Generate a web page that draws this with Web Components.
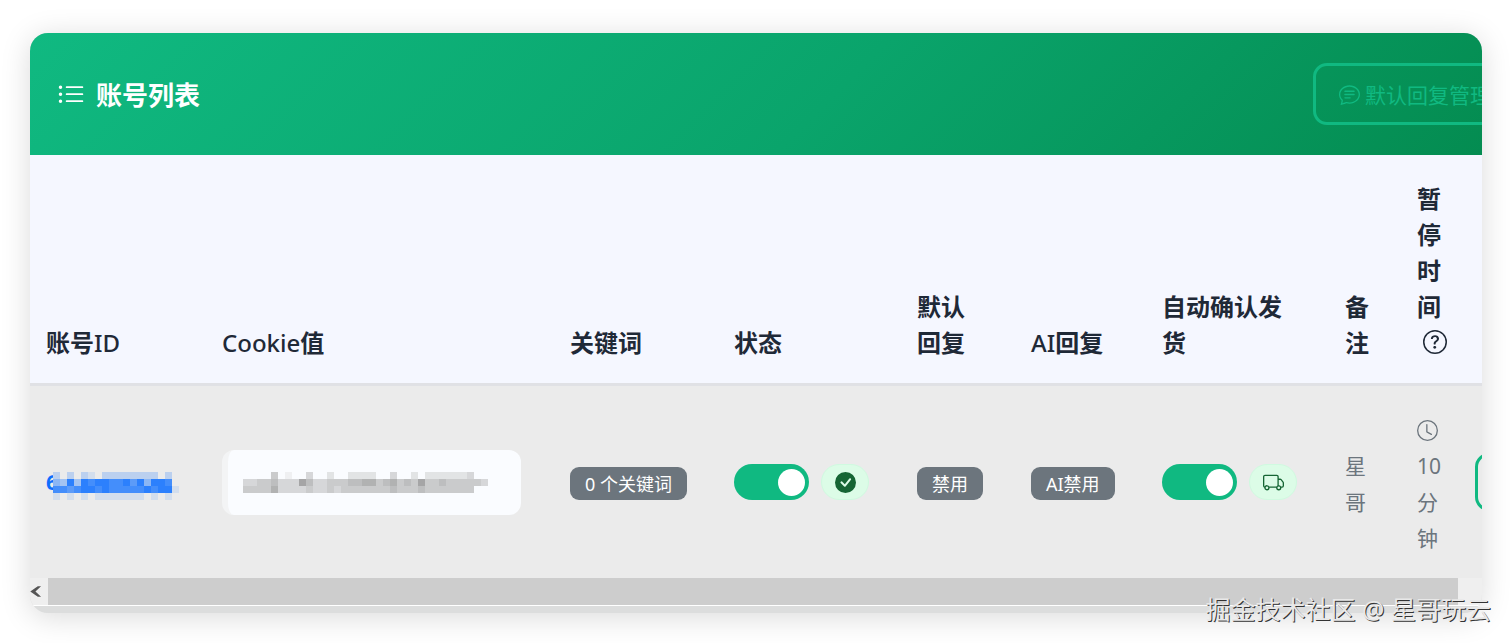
<!DOCTYPE html>
<html lang="zh-CN">
<head>
<meta charset="utf-8">
<title>账号列表</title>
<style>
  html { background: #fff; }
  body { margin: 0; font-family: "Noto Sans", "Noto Sans CJK SC", sans-serif; color: #1f2937; }
</style>
</head>
<body>
<account-page></account-page>
<script>
const ICONS = {
  list: '<path fill-rule="evenodd" d="M5 11.5a.5.5 0 0 1 .5-.5h9a.5.5 0 0 1 0 1h-9a.5.5 0 0 1-.5-.5m0-4a.5.5 0 0 1 .5-.5h9a.5.5 0 0 1 0 1h-9a.5.5 0 0 1-.5-.5m0-4a.5.5 0 0 1 .5-.5h9a.5.5 0 0 1 0 1h-9a.5.5 0 0 1-.5-.5m-3 1a1 1 0 1 0 0-2 1 1 0 0 0 0 2m0 4a1 1 0 1 0 0-2 1 1 0 0 0 0 2m0 4a1 1 0 1 0 0-2 1 1 0 0 0 0 2"/>',
  chat: '<path d="M2.678 11.894a1 1 0 0 1 .287.801 11 11 0 0 1-.398 2c1.395-.323 2.247-.697 2.634-.893a1 1 0 0 1 .71-.074A8 8 0 0 0 8 14c3.996 0 7-2.807 7-6s-3.004-6-7-6-7 2.808-7 6c0 1.468.617 2.83 1.678 3.894m-.493 3.905a22 22 0 0 1-.713.129c-.2.032-.352-.176-.273-.362a10 10 0 0 0 .244-.637l.003-.01c.248-.72.45-1.548.524-2.319C.743 11.37 0 9.76 0 8c0-3.866 3.582-7 8-7s8 3.134 8 7-3.582 7-8 7a9 9 0 0 1-2.347-.306c-.52.263-1.639.742-3.468 1.105"/><path d="M4 5.5a.5.5 0 0 1 .5-.5h7a.5.5 0 0 1 0 1h-7a.5.5 0 0 1-.5-.5M4 8a.5.5 0 0 1 .5-.5h7a.5.5 0 0 1 0 1h-7A.5.5 0 0 1 4 8m0 2.500a.5.5 0 0 1 .5-.5h4a.5.5 0 0 1 0 1h-4a.5.5 0 0 1-.5-.5"/>',
  check: '<path d="M16 8A8 8 0 1 1 0 8a8 8 0 0 1 16 0m-3.970-3.030a.75.75 0 0 0-1.080.022L7.477 9.417 5.384 7.323a.75.75 0 0 0-1.060 1.060L6.970 11.030a.75.75 0 0 0 1.079-.020l3.992-4.990a.75.75 0 0 0-.010-1.050z"/>',
  truck: '<path d="M0 3.5A1.5 1.5 0 0 1 1.500 2h9A1.500 1.500 0 0 1 12 3.500V5h1.020a1.500 1.500 0 0 1 1.170.563l1.481 1.850a1.500 1.500 0 0 1 .329.938V10.500a1.500 1.500 0 0 1-1.500 1.500H14a2 2 0 1 1-4 0H5a2 2 0 1 1-3.998-.085A1.500 1.500 0 0 1 0 10.500zm1.294 7.456A2 2 0 0 1 4.732 11h5.536a2 2 0 0 1 .732-.732V3.500a.5.5 0 0 0-.5-.5h-9a.5.5 0 0 0-.5.5v7a.5.5 0 0 0 .294.456M12 10a2 2 0 0 1 1.732 1h.768a.5.5 0 0 0 .5-.5V8.350a.5.5 0 0 0-.110-.312l-1.480-1.850A.5.5 0 0 0 13.020 6H12zm-9 1a1 1 0 1 0 0 2 1 1 0 0 0 0-2m9 0a1 1 0 1 0 0 2 1 1 0 0 0 0-2"/>',
  clock: '<path d="M8 3.5a.5.5 0 0 0-1 0V9a.5.5 0 0 0 .252.434l3.500 2a.5.5 0 0 0 .496-.868L8 8.710z"/><path d="M8 16A8 8 0 1 0 8 0a8 8 0 0 0 0 16m7-8A7 7 0 1 1 1 8a7 7 0 0 1 14 0"/>',
  question: '<path d="M8 15A7 7 0 1 1 8 1a7 7 0 0 1 0 14m0 1A8 8 0 1 0 8 0a8 8 0 0 0 0 16"/><path d="M5.255 5.786a.237.237 0 0 0 .241.247h.825c.138 0 .248-.113.266-.250.090-.656.540-1.134 1.342-1.134.686 0 1.314.343 1.314 1.168 0 .635-.374.927-.965 1.371-.673.489-1.206 1.060-1.168 1.987l.003.217a.25.25 0 0 0 .25.246h.811a.25.25 0 0 0 .25-.25v-.105c0-.718.273-.927 1.010-1.486.609-.463 1.244-.977 1.244-2.056 0-1.511-1.276-2.241-2.673-2.241-1.267 0-2.655.590-2.750 2.286m1.557 5.763c0 .533.425.927 1.010.927.609 0 1.028-.394 1.028-.927 0-.552-.420-.940-1.029-.940-.584 0-1.009.388-1.009.940"/>',
  left: '<path d="M11.500 2.500H15L9 8l6 5.500h-3.500L3.500 8z"/>'
};

class UiIcon extends HTMLElement {
  connectedCallback() {
    this.attachShadow({ mode: 'open' }).innerHTML = `
      <style>
        :host { display: inline-block; flex: none; width: var(--icon-size, 21px); height: var(--icon-size, 21px); }
        svg { display: block; width: 100%; height: 100%; }
      </style>
      <svg viewBox="0 0 16 16" fill="currentColor" aria-hidden="true">${ICONS[this.getAttribute('name')]}</svg>`;
  }
}

/* Mosaic over private values: each digit is the strength of one 7px cell. */
class PixelMask extends HTMLElement {
  connectedCallback() {
    const rows = this.getAttribute('rows').split(' ');
    const from = this.getAttribute('from').split(',').map(Number);
    const to = this.getAttribute('to').split(',').map(Number);
    const cols = Math.max(...rows.map(r => r.length));
    let cells = '';
    rows.forEach((row, y) => [...row].forEach((c, x) => {
      if (c === '0') return;
      const rgb = from.map((v, i) => Math.round(v + (to[i] - v) * c / 9));
      cells += `<rect x="${x * 7}" y="${y * 7}" width="7" height="7" fill="rgb(${rgb})"/>`;
    }));
    this.attachShadow({ mode: 'open' }).innerHTML = `
      <style>:host { display: block; flex: none; position: relative; } svg { display: block; }</style>
      <svg width="${cols * 7}" height="${rows.length * 7}" shape-rendering="crispEdges" aria-hidden="true">${cells}</svg>`;
  }
}

class UiBadge extends HTMLElement {
  connectedCallback() {
    this.attachShadow({ mode: 'open' }).innerHTML = `
      <style>
        :host { display: inline-flex; align-items: center; height: 33px; padding: 0 15px; border-radius: 9px;
                background: #6c757d; color: #fff; font-size: 18px; white-space: nowrap; vertical-align: middle; }
      </style><slot></slot>`;
  }
}

class ToggleStatus extends HTMLElement {
  connectedCallback() {
    this.attachShadow({ mode: 'open' }).innerHTML = `
      <style>
        :host { display: flex; align-items: center; gap: 12px; }
        label { display: flex; }
        input { appearance: none; display: flex; align-items: center; justify-content: flex-end; box-sizing: border-box;
                width: 75px; height: 36px; margin: 0; padding: 0 4px; border-radius: 18px; background: #10b981; }
        input::before { content: ""; width: 27px; height: 27px; border-radius: 50%; background: #fff; }
        input:not(:checked) { justify-content: flex-start; background: #ccc; }
        .state { display: flex; align-items: center; justify-content: center; box-sizing: border-box; width: 48px;
                 height: 36px; border: 1px solid #d0fae0; border-radius: 18px; background: #dcfce7; color: #166534; }
      </style>
      <label><input type="checkbox" checked></label>
      <span class="state"><ui-icon name="${this.getAttribute('icon')}"></ui-icon></span>`;
  }
}

class OutlineButton extends HTMLElement {
  connectedCallback() {
    this.attachShadow({ mode: 'open' }).innerHTML = `
      <style>
        :host { display: block; }
        button { display: flex; align-items: center; gap: 5px; box-sizing: border-box; height: var(--button-height, 62px);
                 padding: 0 23px; border: 3px solid #10b981; border-radius: 14px; background: transparent;
                 color: #10b981; font: inherit; font-size: 21px; white-space: nowrap; }
      </style><button type="button"><slot></slot></button>`;
  }
}

class CardHeader extends HTMLElement {
  connectedCallback() {
    this.attachShadow({ mode: 'open' }).innerHTML = `
      <style>
        :host { display: flex; align-items: center; justify-content: space-between; box-sizing: border-box; height: 122px;
                padding-left: 27px; background: linear-gradient(135deg, #10b981 0%, #0aa46b 55%, #048c51 100%); }
        h2 { display: flex; align-items: center; gap: 11px; margin: 0; padding-top: 2px; color: #fff; font-size: 26px; line-height: 36px; font-weight: 700; }
        h2 ui-icon { --icon-size: 28px; }
        .actions { width: 169px; flex: none; }
      </style>
      <h2><ui-icon name="list"></ui-icon><slot></slot></h2>
      <div class="actions"><slot name="action"></slot></div>`;
  }
}

class AccountTable extends HTMLElement {
  connectedCallback() {
    this.attachShadow({ mode: 'open' }).innerHTML = `
      <style>
        :host { display: block; overflow: hidden; background: #ebebeb; }
        table { width: 1800px; border-collapse: separate; border-spacing: 0; table-layout: fixed; }
        th, td { box-sizing: border-box; padding: 0 16px; text-align: left; line-height: 36px; }
        th { padding-top: 26px; padding-bottom: 22px; vertical-align: bottom; background: #f5f7ff; font-size: 24px; font-weight: 600; }
        th .latin { font-weight: 500; }
        td { height: 195px; vertical-align: middle; border-top: 3px solid #e0e1e5; color: #6c757d; font-size: 21px; }
        td.text { padding-top: 4px; }
        .help { display: block; padding-left: 6px; height: 36px; }
        .help ui-icon { --icon-size: 24px; padding-top: 5px; display: block; }
        a { display: flex; align-items: center; color: #0d6efd; font-weight: 700; text-decoration: none; }
        a pixel-mask { margin-left: -5px; padding-top: 8px; }
        .cookie { display: flex; align-items: center; box-sizing: border-box; width: 299px; height: 65px; padding-left: 15px;
                  border-left: 6px solid #f3f4f5; border-radius: 12px; background: #fafcff; }
        .clock { display: flex; align-items: center; height: 36px; }
        outline-button { --button-height: 58px; }
        .id { width: 176px; } .value { width: 348px; } .words { width: 164px; } .status { width: 183px; }
        .reply { width: 114px; } .ai { width: 131px; } .note { width: 72px; } .pause { width: 58px; }
      </style>
      <table>
        <colgroup><col class="id"><col class="value"><col class="words"><col class="status"><col class="reply">
          <col class="ai"><col class="status"><col class="note"><col class="pause"><col></colgroup>
        <thead><tr>
          <th>账号<span class="latin">ID</span></th><th><span class="latin">Cookie</span>值</th><th>关键词</th><th>状态</th>
          <th>默认<br>回复</th><th><span class="latin">AI</span>回复</th>
          <th>自动确认发<br>货</th><th>备注</th><th>暂停时间<span class="help"><ui-icon name="question"></ui-icon></span></th><th></th>
        </tr></thead>
        <tbody><tr>
          <td><a href="#account">6<pixel-mask from="235,235,235" to="20,115,255"
            rows="202021022222222020 438387887786848870 776788787777787881 101010111111101010"></pixel-mask></a></td>
          <td><div class="cookie"><pixel-mask from="251,253,255" to="140,140,140"
            rows="00004010030020022220030020222222300 33445333753344455664564547445444443 44446333343343444444454445444444400"></pixel-mask></div></td>
          <td><ui-badge>0 个关键词</ui-badge></td>
          <td><toggle-status icon="check"></toggle-status></td>
          <td><ui-badge>禁用</ui-badge></td>
          <td><ui-badge>AI禁用</ui-badge></td>
          <td><toggle-status icon="truck"></toggle-status></td>
          <td class="text">星哥</td>
          <td class="text"><span class="clock"><ui-icon name="clock"></ui-icon></span>10分钟</td>
          <td><outline-button><ui-icon name="chat"></ui-icon></outline-button></td>
        </tr></tbody>
      </table>`;
  }
}

class ScrollStrip extends HTMLElement {
  connectedCallback() {
    this.attachShadow({ mode: 'open' }).innerHTML = `
      <style>
        :host { display: flex; height: 27px; background: #efefef; border-bottom: 1px solid #fff; }
        button { display: flex; align-items: center; justify-content: center; width: 18px; padding: 0 10px 0 0; border: 0; background: none; color: #555; }
        button ui-icon { --icon-size: 15px; }
        .thumb { flex: 1; margin-right: 24px; background: #cdcdcd; }
      </style>
      <button type="button"><ui-icon name="left"></ui-icon></button><div class="thumb"></div>`;
  }
}

class AccountPage extends HTMLElement {
  connectedCallback() {
    this.attachShadow({ mode: 'open' }).innerHTML = `
      <style>
        :host { display: block; position: relative; box-sizing: border-box; min-height: 100vh; padding: 33px 29px 29px 30px; overflow: hidden; }
        .card { overflow: hidden; padding-bottom: 7px; border-radius: 18px; background: #dcdddd; box-shadow: 0 4px 30px rgba(0, 0, 0, .15); }
        .mark { position: absolute; right: 20px; bottom: 16px; color: #e8e8e8; font-size: 25px; line-height: 36px;
                white-space: nowrap; text-shadow: 1px 1px 0 #333; }
      </style>
      <div class="card">
        <card-header>账号列表<outline-button slot="action"><ui-icon name="chat"></ui-icon>默认回复管理</outline-button></card-header>
        <account-table></account-table>
        <scroll-strip></scroll-strip>
      </div>
      <div class="mark">掘金技术社区 @ 星哥玩云</div>`;
  }
}

customElements.define('ui-icon', UiIcon);
customElements.define('pixel-mask', PixelMask);
customElements.define('ui-badge', UiBadge);
customElements.define('toggle-status', ToggleStatus);
customElements.define('outline-button', OutlineButton);
customElements.define('card-header', CardHeader);
customElements.define('account-table', AccountTable);
customElements.define('scroll-strip', ScrollStrip);
customElements.define('account-page', AccountPage);
</script>
</body>
</html>
